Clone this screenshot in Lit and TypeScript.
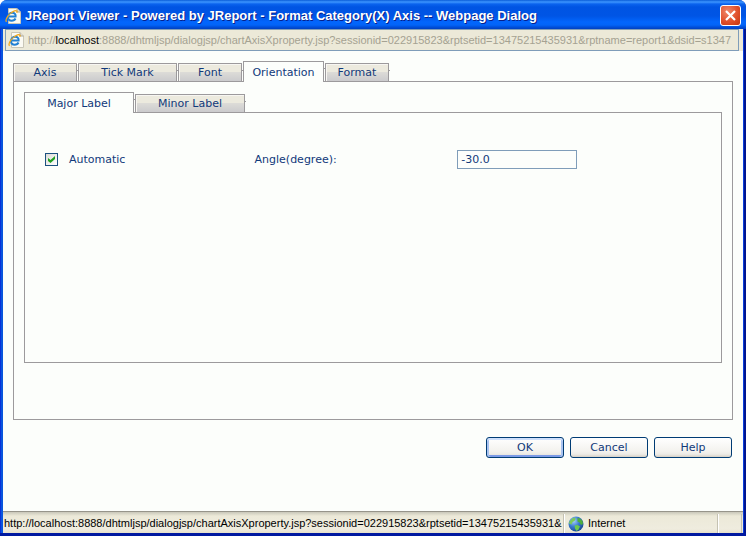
import { LitElement, html, css, svg } from "lit";
import { customElement, property, state } from "lit/decorators.js";
import { classMap } from "lit/directives/class-map.js";

const HOST = "localhost";
const PATH = ":8888/dhtmljsp/dialogjsp/chartAxisXproperty.jsp?sessionid=022915823&rptsetid=13475215435931&";
const QUERY_END = "rptname=report1&dsid=s1347";

@customElement("page-icon")
class PageIcon extends LitElement {
  static styles = css`
    :host { display: block; flex: none; width: 16px; height: 16px; }
    svg { display: block; width: 16px; height: 16px; }
  `;
  render() {
    return html`<svg viewBox="0 0 16 16" aria-hidden="true">
      <path d="M3.500 .5H12L15.500 4V15.500H3.500Z" fill="#fbfaf3" stroke="#c9c6b8" />
      <path d="M12 .5V4H15.500" fill="#dedbd0" stroke="#aaa89b" />
      <path d="M10.500 10.500C9.800 12 8.200 12.700 6.700 12.700C4.400 12.700 3 11.200 3 9C3 6.500 4.900 4.800 7.200 4.800C9.600 4.800 10.900 6.400 10.600 8.500H4"
        fill="none" stroke="#2280d4" stroke-width="2" />
      <path d="M1.500 13.800C-.4 11.500 4 5 9.500 2.900C11.800 2.200 12.600 3 11.600 4.800" fill="none" stroke="#f2a71b" stroke-width="1.300" />
    </svg>`;
  }
}

interface Tab {
  label: string;
  size: string;
}

@customElement("tab-strip")
class TabStrip extends LitElement {
  @property({ attribute: false }) tabs: Tab[] = [];
  @property({ type: Number }) selected = 0;

  static styles = css`
    :host { display: block; }
    .strip { display: flex; align-items: flex-end; gap: 1px; height: 20px; }
    .tab {
      position: relative;
      box-sizing: border-box;
      height: 18px;
      padding: 0;
      border: 1px solid #9c9a9c;
      border-bottom: 0;
      border-radius: 0;
      background: linear-gradient(#eceade 0 45%, #dcdbd7 50%, #cbcbcd);
      box-shadow: inset 1px 1px #f7f6f2;
      color: #11397a;
      font: 11px/17px "DejaVu Sans", Verdana, sans-serif;
    }
    .tab::after {
      content: "";
      position: absolute;
      top: 6px;
      right: -2px;
      width: 1px;
      height: 1px;
      background: #9c9a9c;
    }
    .small { width: 64px; }
    .medium { width: 81px; }
    .wide { width: 99px; }
    .label { width: 110px; }
    .selected {
      height: 21px;
      margin-bottom: -1px;
      background: #fcfefb;
      box-shadow: none;
    }
  `;
  render() {
    return html`<div class="strip" role="tablist">
      ${this.tabs.map(
        (t, i) => html`<button
          role="tab"
          aria-selected=${i === this.selected ? "true" : "false"}
          class=${classMap({ tab: true, [t.size]: true, selected: i === this.selected })}
          @click=${() => (this.selected = i)}
        >${t.label}</button>`
      )}
    </div>`;
  }
}

@customElement("app-root")
class AppRoot extends LitElement {
  @state() private automatic = true;

  static styles = css`
    :host {
      display: block;
      background: #fff;
      color: #11397a;
      font: 11px/16px "DejaVu Sans", Verdana, sans-serif;
    }
    .window {
      box-sizing: border-box;
      display: flex;
      flex-direction: column;
      min-height: 100vh;
      padding: 0 3px 3px;
      border-radius: 7px 7px 0 0;
      background: linear-gradient(90deg, #0831d9 0 1px, #0855dd 1px 3px, #0a4be0 3px calc(100% - 3px), #0a3fdc calc(100% - 3px) calc(100% - 2px), #001590 calc(100% - 2px));
      box-shadow: inset 0 -3px #0019a0;
      overflow: hidden;
    }
    .title {
      display: flex;
      align-items: center;
      gap: 4px;
      height: 29px;
      margin: 0 -3px;
      padding: 2px 5px 0;
      box-sizing: border-box;
      background: linear-gradient(#0a5cd8 0, #3d95ff 2px, #0a63ee 4px, #0054e3 7px, #0055e5 16px, #0266fd 22px, #0264f8 25px, #0050dc 27px, #0040c0 29px);
    }
    .caption {
      flex: 1;
      margin: 0;
      min-width: 0;
      overflow: hidden;
      white-space: nowrap;
      color: #fff;
      text-shadow: 1px 1px #07208a;
      font: bold 13px/20px "Liberation Sans", "Trebuchet MS", sans-serif;
    }
    .close {
      width: 21px;
      height: 21px;
      padding: 0;
      border: 1px solid #fff;
      border-radius: 3px;
      background: radial-gradient(circle at 35% 30%, #f0896b, #e0502b 55%, #c2340e);
    }
    .close svg { display: block; width: 19px; height: 19px; }
    .address-row { background: #ece9d8; padding: 0 4px 0 2px; }
    .address {
      display: flex;
      align-items: center;
      gap: 4px;
      box-sizing: border-box;
      height: 22px;
      padding: 0 3px 0 2px;
      border: 1px solid #7f9db9;
      background: #ece9d8;
      color: #a5a292;
    }
    .url {
      flex: 1;
      min-width: 0;
      overflow: hidden;
      white-space: nowrap;
      font: 11px/16px "Liberation Sans", Tahoma, sans-serif;
    }
    .host { color: #000; }
    .body {
      flex: 1;
      display: flex;
      flex-direction: column;
      padding: 10px 10px 53px;
      background: #fcfefb;
    }
    .panel {
      flex: 1;
      display: flex;
      flex-direction: column;
      padding: 10px 10px 56px;
      border: 1px solid #9c9a9c;
    }
    .sheet { flex: 1; padding: 37px 0 20px 20px; border: 1px solid #9c9a9c; }
    .fields { display: grid; grid-template-columns: 31fr 30fr 39fr; align-items: center; }
    .check { display: flex; align-items: center; gap: 11px; }
    .box {
      appearance: none;
      box-sizing: border-box;
      width: 13px;
      height: 13px;
      margin: 0;
      border: 1px solid #1c5180;
      background: linear-gradient(135deg, #dcdcd7, #fff);
    }
    .box:checked::before {
      content: "";
      display: block;
      width: 7px;
      height: 7px;
      margin: 2px;
      background: #21a121;
      clip-path: polygon(0 28%, 36% 56%, 100% 0, 100% 44%, 36% 100%, 0 72%);
    }
    .angle {
      box-sizing: border-box;
      width: 120px;
      height: 19px;
      padding: 0 3px;
      border: 1px solid #7f9db9;
      background: #fcfefb;
      color: #11397a;
      font: inherit;
    }
    .actions { display: flex; justify-content: flex-end; gap: 6px; padding: 17px 1px 0 0; }
    .action {
      width: 78px;
      height: 21px;
      padding: 0;
      border: 1px solid #003c74;
      border-radius: 3px;
      background: linear-gradient(#fff, #f3f2ee 70%, #ecebe6 85%, #d6d0c5);
      color: #11397a;
      font: inherit;
    }
    .default { box-shadow: inset 0 2px #cee0fb, inset 2px 0 #a9c3f0, inset -2px 0 #a9c3f0, inset 0 -2px #7b9ae6; }
    .status {
      display: flex;
      align-items: stretch;
      height: 22px;
      box-sizing: border-box;
      padding-top: 2px;
      border-top: 1px solid #96948a;
      background: linear-gradient(#c9c7ba, #ece9d8 4px, #efecdf 17px, #e5e0cb);
      color: #000;
      font: 11px/19px "Liberation Sans", Tahoma, sans-serif;
    }
    .location { flex: 1; min-width: 0; padding-left: 1px; overflow: hidden; white-space: nowrap; }
    .zone {
      display: flex;
      align-items: center;
      gap: 4px;
      width: 154px;
      box-sizing: border-box;
      padding-left: 4px;
      border-left: 1px solid #c5c2b2;
      box-shadow: inset 1px 0 #fff;
    }
    .zone svg { width: 16px; height: 16px; }
    .cell { width: 23px; border-left: 1px solid #c5c2b2; box-shadow: inset 1px 0 #fff; }
    .edge { width: 2px; border-left: 1px solid #c5c2b2; box-sizing: border-box; }
  `;

  private globe = svg`<svg viewBox="0 0 16 16" aria-hidden="true">
    <defs><radialGradient id="sea" cx=".35" cy=".3" r=".75">
      <stop offset="0" stop-color="#a8d0f8"/><stop offset=".5" stop-color="#3a7cd0"/><stop offset="1" stop-color="#1a4790"/>
    </radialGradient></defs>
    <circle cx="8" cy="8" r="7.500" fill="url(#sea)"/>
    <path d="M1.500 5.500L4 2.500L7 1.500L7.500 3L6.500 5L4.500 6L3.500 8.500L1 7.500Z" fill="#7cca5a"/>
    <path d="M9.500 2L12 2.500L14.500 5L15 8L13 9L11.500 6.500L9.500 5.500Z" fill="#4fae3c"/>
    <path d="M6.500 9.500L9.500 9L12 10.500L10.500 13.500L8.500 15L7 12.500Z" fill="#6cc850"/>
  </svg>`;

  render() {
    return html`<div class="window">
      <header class="title">
        <page-icon></page-icon>
        <h1 class="caption">JReport Viewer - Powered by JReport - Format Category(X) Axis -- Webpage Dialog</h1>
        <button class="close" aria-label="Close">
          <svg viewBox="0 0 19 19"><path d="M5 5L14 14M14 5L5 14" stroke="#fff" stroke-width="2.200" /></svg>
        </button>
      </header>
      <div class="address-row">
        <div class="address">
          <page-icon></page-icon>
          <div class="url">http://<span class="host">${HOST}</span>${PATH}${QUERY_END}</div>
        </div>
      </div>
      <main class="body">
        <tab-strip
          .selected=${3}
          .tabs=${[
            { label: "Axis", size: "small" },
            { label: "Tick Mark", size: "wide" },
            { label: "Font", size: "small" },
            { label: "Orientation", size: "medium" },
            { label: "Format", size: "small" },
          ]}
        ></tab-strip>
        <section class="panel">
          <tab-strip
            .tabs=${[
              { label: "Major Label", size: "label" },
              { label: "Minor Label", size: "label" },
            ]}
          ></tab-strip>
          <div class="sheet">
            <div class="fields">
              <label class="check">
                <input
                  class="box"
                  type="checkbox"
                  .checked=${this.automatic}
                  @change=${(e: Event) => (this.automatic = (e.target as HTMLInputElement).checked)}
                />
                Automatic
              </label>
              <label for="angle">Angle(degree):</label>
              <input class="angle" id="angle" type="text" value="-30.0" />
            </div>
          </div>
        </section>
        <div class="actions">
          <button class="action default">OK</button>
          <button class="action">Cancel</button>
          <button class="action">Help</button>
        </div>
      </main>
      <footer class="status">
        <div class="location">http://${HOST}${PATH}</div>
        <div class="zone">${this.globe}<span>Internet</span></div>
        <div class="cell"></div>
        <div class="edge"></div>
      </footer>
    </div>`;
  }
}
